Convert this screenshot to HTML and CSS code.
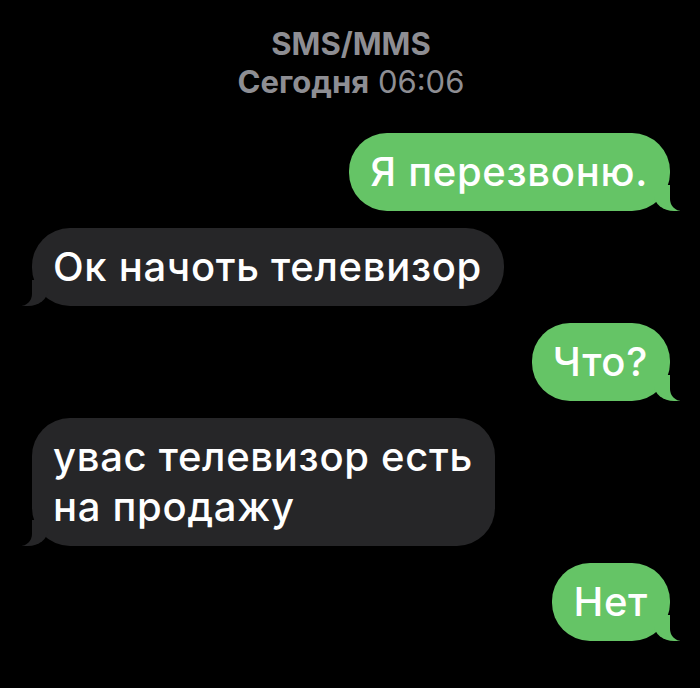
FILE: index.html
```html
<!DOCTYPE html>
<html lang="ru">
<head>
<meta charset="UTF-8">
<meta name="viewport" content="width=device-width, initial-scale=1.0">
<title>Сообщения</title>
<link rel="stylesheet" href="styles.css">
</head>
<body>
    <div class="thread">
        <div class="thread-header">
            <div class="service">SMS/MMS</div>
            <div class="date"><b>Сегодня</b> 06:06</div>
        </div>

        <div class="bubble sent">Я перезвоню.</div>
        <div class="bubble received">Ок начоть телевизор</div>
        <div class="bubble sent">Что?</div>
        <div class="bubble received">увас телевизор есть<br>на продажу</div>
        <div class="bubble sent">Нет</div>
    </div>
</body>
</html>
```

FILE: styles.css
```css
body {
    margin: 0;
    padding: 0;
    background-color: #000;
    font-family: Inter, "Liberation Sans", sans-serif;
}

.thread {
    display: flex;
    flex-direction: column;
    gap: 17px;
    padding: 25px 30px 40px 32px;
}

.thread-header {
    text-align: center;
    color: #8e8e93;
    font-size: 31px;
    line-height: 38px;
    margin-bottom: 15px;
}

.service {
    font-weight: 700;
}

.date b {
    font-weight: 700;
}

.bubble {
    position: relative;
    max-width: 470px;
    padding: 14px 22px 14px 21px;
    border-radius: 38px;
    font-size: 40px;
    font-weight: 500;
    letter-spacing: 0.7px;
    line-height: 50px;
    color: #fff;
}

.sent {
    align-self: flex-end;
    background-color: #65c466;
}

.received {
    align-self: flex-start;
    background-color: #262628;
}

/* tails */
.bubble::before,
.bubble::after {
    content: "";
    position: absolute;
    bottom: 0;
    height: 26px;
}

.sent::before {
    right: -10px;
    width: 26px;
    background-color: #65c466;
    border-bottom-left-radius: 20px 16px;
}

.sent::after {
    right: -14px;
    width: 14px;
    background-color: #000;
    border-bottom-left-radius: 12px;
}

.received::before {
    left: -10px;
    width: 26px;
    background-color: #262628;
    border-bottom-right-radius: 20px 16px;
}

.received::after {
    left: -14px;
    width: 14px;
    background-color: #000;
    border-bottom-right-radius: 12px;
}
```
